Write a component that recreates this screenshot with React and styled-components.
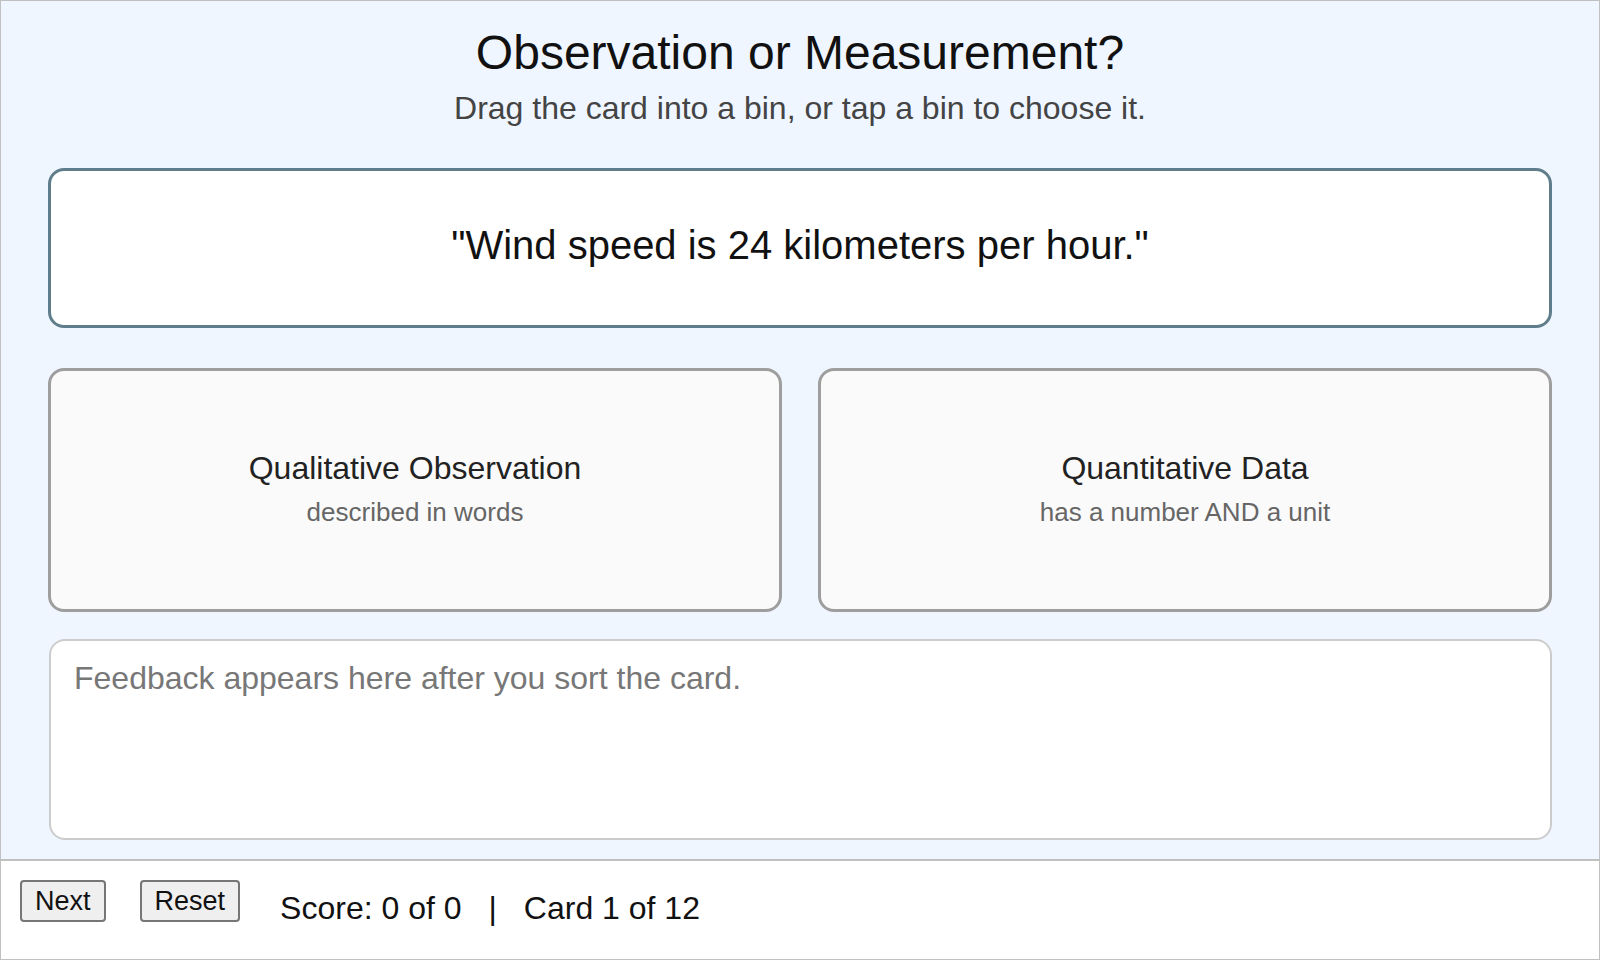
import React, { useState } from "react";
import styled, { createGlobalStyle } from "styled-components";

const GlobalStyle = createGlobalStyle`
  html, body {
    margin: 0;
    padding: 0;
    background: #ffffff;
  }
  * {
    box-sizing: border-box;
  }
`;

const bins = [
  { id: "qual", title: "Qualitative Observation", hint: "described in words" },
  { id: "quant", title: "Quantitative Data", hint: "has a number AND a unit" },
];

const App = () => {
  const [score] = useState({ right: 0, total: 0 });
  const [card] = useState(1);

  return (
    <Frame>
      <GlobalStyle />
      <Main>
        <Title>Observation or Measurement?</Title>
        <Subtitle>Drag the card into a bin, or tap a bin to choose it.</Subtitle>

        <Card draggable>"Wind speed is 24 kilometers per hour."</Card>

        <BinRow>
          {bins.map((bin) => (
            <Bin key={bin.id}>
              <BinTitle>{bin.title}</BinTitle>
              <BinHint>{bin.hint}</BinHint>
            </Bin>
          ))}
        </BinRow>

        <Feedback>Feedback appears here after you sort the card.</Feedback>
      </Main>

      <Footer>
        <Button>Next</Button>
        <Button>Reset</Button>
        <Status>
          Score: {score.right} of {score.total}
          <Sep>|</Sep>
          Card {card} of 12
        </Status>
      </Footer>
    </Frame>
  );
};

export default App;

const Frame = styled.div`
  width: 1600px;
  height: 960px;
  border: 1px solid #c0c0c0;
  display: flex;
  flex-direction: column;
  font-family: "Liberation Sans", Arial, sans-serif;
  color: #111;
`;

const Main = styled.main`
  flex: 1;
  background: #eff6ff;
  padding: 24px 47px 0 47px;
  display: flex;
  flex-direction: column;
`;

const Title = styled.h1`
  margin: 0;
  font-size: 48px;
  font-weight: 400;
  text-align: center;
  color: #111;
`;

const Subtitle = styled.p`
  margin: 10px 0 0 0;
  font-size: 32px;
  text-align: center;
  color: #444;
`;

const Card = styled.div`
  margin-top: 41px;
  height: 160px;
  padding-bottom: 6px;
  border: 3px solid #607d8b;
  border-radius: 16px;
  background: #ffffff;
  display: flex;
  align-items: center;
  justify-content: center;
  font-size: 40px;
  color: #111;
  cursor: grab;
`;

const BinRow = styled.div`
  margin-top: 40px;
  display: grid;
  grid-template-columns: 1fr 1fr;
  gap: 36px;
`;

const Bin = styled.div`
  height: 244px;
  padding-bottom: 2px;
  border: 3px solid #9e9e9e;
  border-radius: 16px;
  background: #fafafa;
  display: flex;
  flex-direction: column;
  align-items: center;
  justify-content: center;
  cursor: pointer;
`;

const BinTitle = styled.div`
  font-size: 32px;
  color: #222;
`;

const BinHint = styled.div`
  margin-top: 10px;
  font-size: 26px;
  color: #666;
`;

const Feedback = styled.div`
  margin: 27px 0 0 1px;
  height: 201px;
  border: 2px solid #cccccc;
  border-radius: 16px;
  background: #ffffff;
  padding: 19px 23px;
  font-size: 32px;
  color: #777;
`;

const Footer = styled.footer`
  height: 100px;
  border-top: 2px solid #c0c0c0;
  background: #ffffff;
  padding: 19px 19px;
  display: flex;
  align-items: flex-start;
  gap: 34px;
`;

const Button = styled.button`
  height: 42px;
  padding: 0 13px;
  font-family: "Liberation Sans", Arial, sans-serif;
  font-size: 27px;
  color: #111;
  background: #efefef;
  border: 2px solid #767676;
  border-radius: 4px;
  cursor: pointer;
`;

const Status = styled.div`
  margin-top: 10px;
  margin-left: 6px;
  font-size: 32px;
  color: #111;
`;

const Sep = styled.span`
  margin: 0 27px;
`;
